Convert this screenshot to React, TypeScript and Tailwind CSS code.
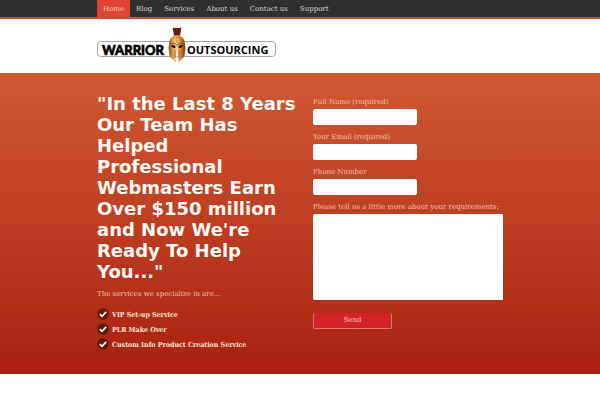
const links = ['Home', 'Blog', 'Services', 'About us', 'Contact us', 'Support'];

const services = ['VIP Set-up Service', 'PLR Make Over', 'Custom Info Product Creation Service'];

const fields = [
  { id: 'full-name', label: 'Full Name (required)', type: 'text' },
  { id: 'email', label: 'Your Email (required)', type: 'email' },
  { id: 'phone', label: 'Phone Number', type: 'tel' },
];

function Helmet() {
  return (
    <svg viewBox="0 0 18 36" className="h-9 w-[18px]" aria-hidden="true">
      <defs>
        <linearGradient id="bronze" x1="0" y1="0" x2="1" y2="0">
          <stop offset="0" stopColor="#8f4a12" />
          <stop offset="0.3" stopColor="#e9ac58" />
          <stop offset="0.5" stopColor="#f3cd8a" />
          <stop offset="0.72" stopColor="#cf8130" />
          <stop offset="1" stopColor="#753409" />
        </linearGradient>
      </defs>
      <path d="M4.6 .4 Q9 1.6 13.4 .4 L11.8 9.5 H6.2Z" fill="#7d1a10" />
      <path d="M7.4 1.5 L7.9 8.6 M10.6 1.5 L10.1 8.6" stroke="#4e0c08" strokeWidth=".6" />
      <path d="M9 8.2 C4 8.5 1 12.5 1 17 L.6 21 L1.6 29 C3.4 31.6 5.6 33.4 8 35.4 L8.5 24 H9.5 L10 35.4 C12.4 33.4 14.6 31.6 16.4 29 L17.4 21 L17 17 C17 12.5 14 8.5 9 8.2Z" fill="url(#bronze)" />
      <path d="M2.2 17.2 Q5.5 14.6 9 18 Q12.5 14.6 15.8 17.2" fill="none" stroke="#7a3c0c" strokeWidth=".8" />
      <path d="M3 18.4 Q5.8 17.4 7.8 20 Q7 21.4 4.6 20.6Z M15 18.4 Q12.2 17.4 10.2 20 Q11 21.4 13.4 20.6Z" fill="#1e0c05" />
      <path d="M8.3 20 H9.7 L9.9 24 H8.1Z" fill="#ffe0a0" />
      <path d="M7.2 23.8 L8.2 25 H9.8 L10.8 23.8 L11 31 L9.9 34.4 L9.5 27 H8.5 L8.1 34.4 L7 31Z" fill="#f8ece0" />
      <path d="M7 23.6 L7.2 31 M11 23.6 L10.8 31" stroke="#5b280a" strokeWidth=".7" />
      <path d="M9 9 V16 M5 12 Q7 10 9 10 Q11 10 13 12" fill="none" stroke="#a85f1e" strokeWidth=".6" />
    </svg>
  );
}

function Logo() {
  return (
    <a href="#" aria-label="Warrior Outsourcing" className="relative flex h-9 w-[179px] items-center leading-4 text-black">
      <span className="absolute inset-x-0 top-[14px] h-4 rounded border border-[#a5a5a5]" />
      <span className="relative w-[71px] shrink-0 pt-[10px] pr-1 text-right font-['Lato'] text-[13px] font-black [-webkit-text-stroke:0.6px_black]">WARRIOR</span>
      <span className="relative w-[18px] shrink-0">
        <Helmet />
      </span>
      <span className="relative pt-[10px] pl-px font-['Open_Sans'] text-[11px] font-bold">OUTSOURCING</span>
    </a>
  );
}

function Check() {
  return (
    <svg viewBox="0 0 12 12" className="size-3 shrink-0" aria-hidden="true">
      <circle cx="6" cy="6" r="5.8" fill="#651509" />
      <path d="M2.8 6.2 L5 8.3 L9.2 3.8" fill="none" stroke="#fff" strokeWidth="1.7" />
    </svg>
  );
}

export default function App() {
  return (
    <div className="min-h-screen bg-white font-['DejaVu_Serif',serif] text-[7px] leading-[9px]">
      <nav className="border-b-2 border-[#d94534] bg-[#303030]">
        <ul className="mx-auto flex max-w-[406px] text-[#d5d5d5]">
          {links.map((link, i) => (
            <li key={link}>
              <a href="#" className={i === 0 ? 'block bg-[#df4432] px-[6px] pt-[5px] pb-[3px] text-[#ffc5b3]' : 'block px-[6px] pt-[5px] pb-[3px]'}>
                {link}
              </a>
            </li>
          ))}
        </ul>
      </nav>

      <header className="mx-auto max-w-[406px] pt-2 pb-[10px]">
        <Logo />
      </header>

      <main className="border-t border-[#b85a3e] bg-linear-to-b from-[#d05832] to-[#a91f10] text-[#f5c3ae]">
        <div className="mx-auto flex max-w-[406px] gap-4 pt-[19px] pb-6">
          <section className="w-[200px]">
            <h1 className="font-['DejaVu_Sans'] text-[18px] leading-[21px] font-bold text-[#fffaf5]">
              "In the Last 8 Years Our Team Has Helped Professional Webmasters Earn Over $150 million and Now We're Ready To Help You..."
            </h1>
            <p className="mt-2">The services we specialize in are...</p>
            <ul className="mt-[9px] space-y-[3px] font-['DejaVu_Serif_Condensed','DejaVu_Serif',serif] font-bold text-[#ffe5d8]">
              {services.map((service) => (
                <li key={service} className="flex items-center gap-[3px]">
                  <Check />
                  {service}
                </li>
              ))}
            </ul>
          </section>

          <form className="flex flex-1 flex-col items-start pt-[5px]">
            {fields.map((field) => (
              <div key={field.id} className="mb-2">
                <label htmlFor={field.id} className="block">{field.label}</label>
                <input id={field.id} type={field.type} className="mt-[2px] block h-4 w-[104px] rounded-xs bg-white px-1 text-black" />
              </div>
            ))}
            <label htmlFor="requirements" className="whitespace-nowrap">Please tell us a little more about your requirements:</label>
            <textarea id="requirements" className="mt-[2px] block h-[86px] w-full resize-none rounded-l-xs bg-white p-1 text-black" />
            <button type="submit" className="mt-[13px] h-4 w-[79px] rounded-xs border border-t-0 border-[#e8776a] bg-[#d32329]">
              Send
            </button>
          </form>
        </div>
      </main>
    </div>
  );
}
